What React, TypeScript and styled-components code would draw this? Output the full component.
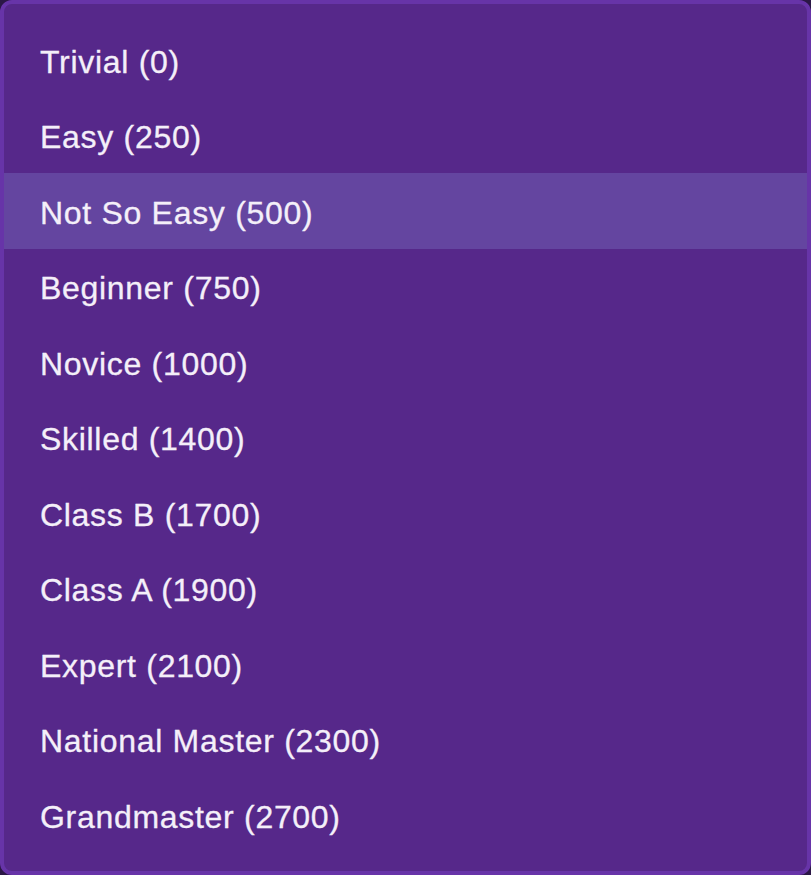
import React from "react";
import styled, { createGlobalStyle } from "styled-components";

const Global = createGlobalStyle`
  html, body { margin: 0; padding: 0; background: #2b1746; }
  #root { width: 811px; height: 875px; }
`;

const Panel = styled.div`
  box-sizing: border-box;
  width: 811px;
  height: 875px;
  background: #56288a;
  border: 4px solid #6734a8;
  border-radius: 12px;
  padding: 18px 0;
  display: flex;
  flex-direction: column;
  font-family: "Liberation Sans", Arial, sans-serif;
`;

const Item = styled.div<{ $active?: boolean }>`
  height: 75.5px;
  flex: 0 0 75.5px;
  display: flex;
  align-items: center;
  padding-left: 36px;
  padding-top: 5px;
  box-sizing: border-box;
  font-size: 32px;
  letter-spacing: 0.7px;
  color: #f4eff9;
  -webkit-text-stroke: 0.3px #f4eff9;
  background: ${(p) => (p.$active ? "#6445a0" : "transparent")};
`;

const levels = [
  "Trivial (0)",
  "Easy (250)",
  "Not So Easy (500)",
  "Beginner (750)",
  "Novice (1000)",
  "Skilled (1400)",
  "Class B (1700)",
  "Class A (1900)",
  "Expert (2100)",
  "National Master (2300)",
  "Grandmaster (2700)",
];

export default function App() {
  return (
    <>
      <Global />
      <Panel>
        {levels.map((l, i) => (
          <Item key={l} $active={i === 2}>
            {l}
          </Item>
        ))}
      </Panel>
    </>
  );
}
